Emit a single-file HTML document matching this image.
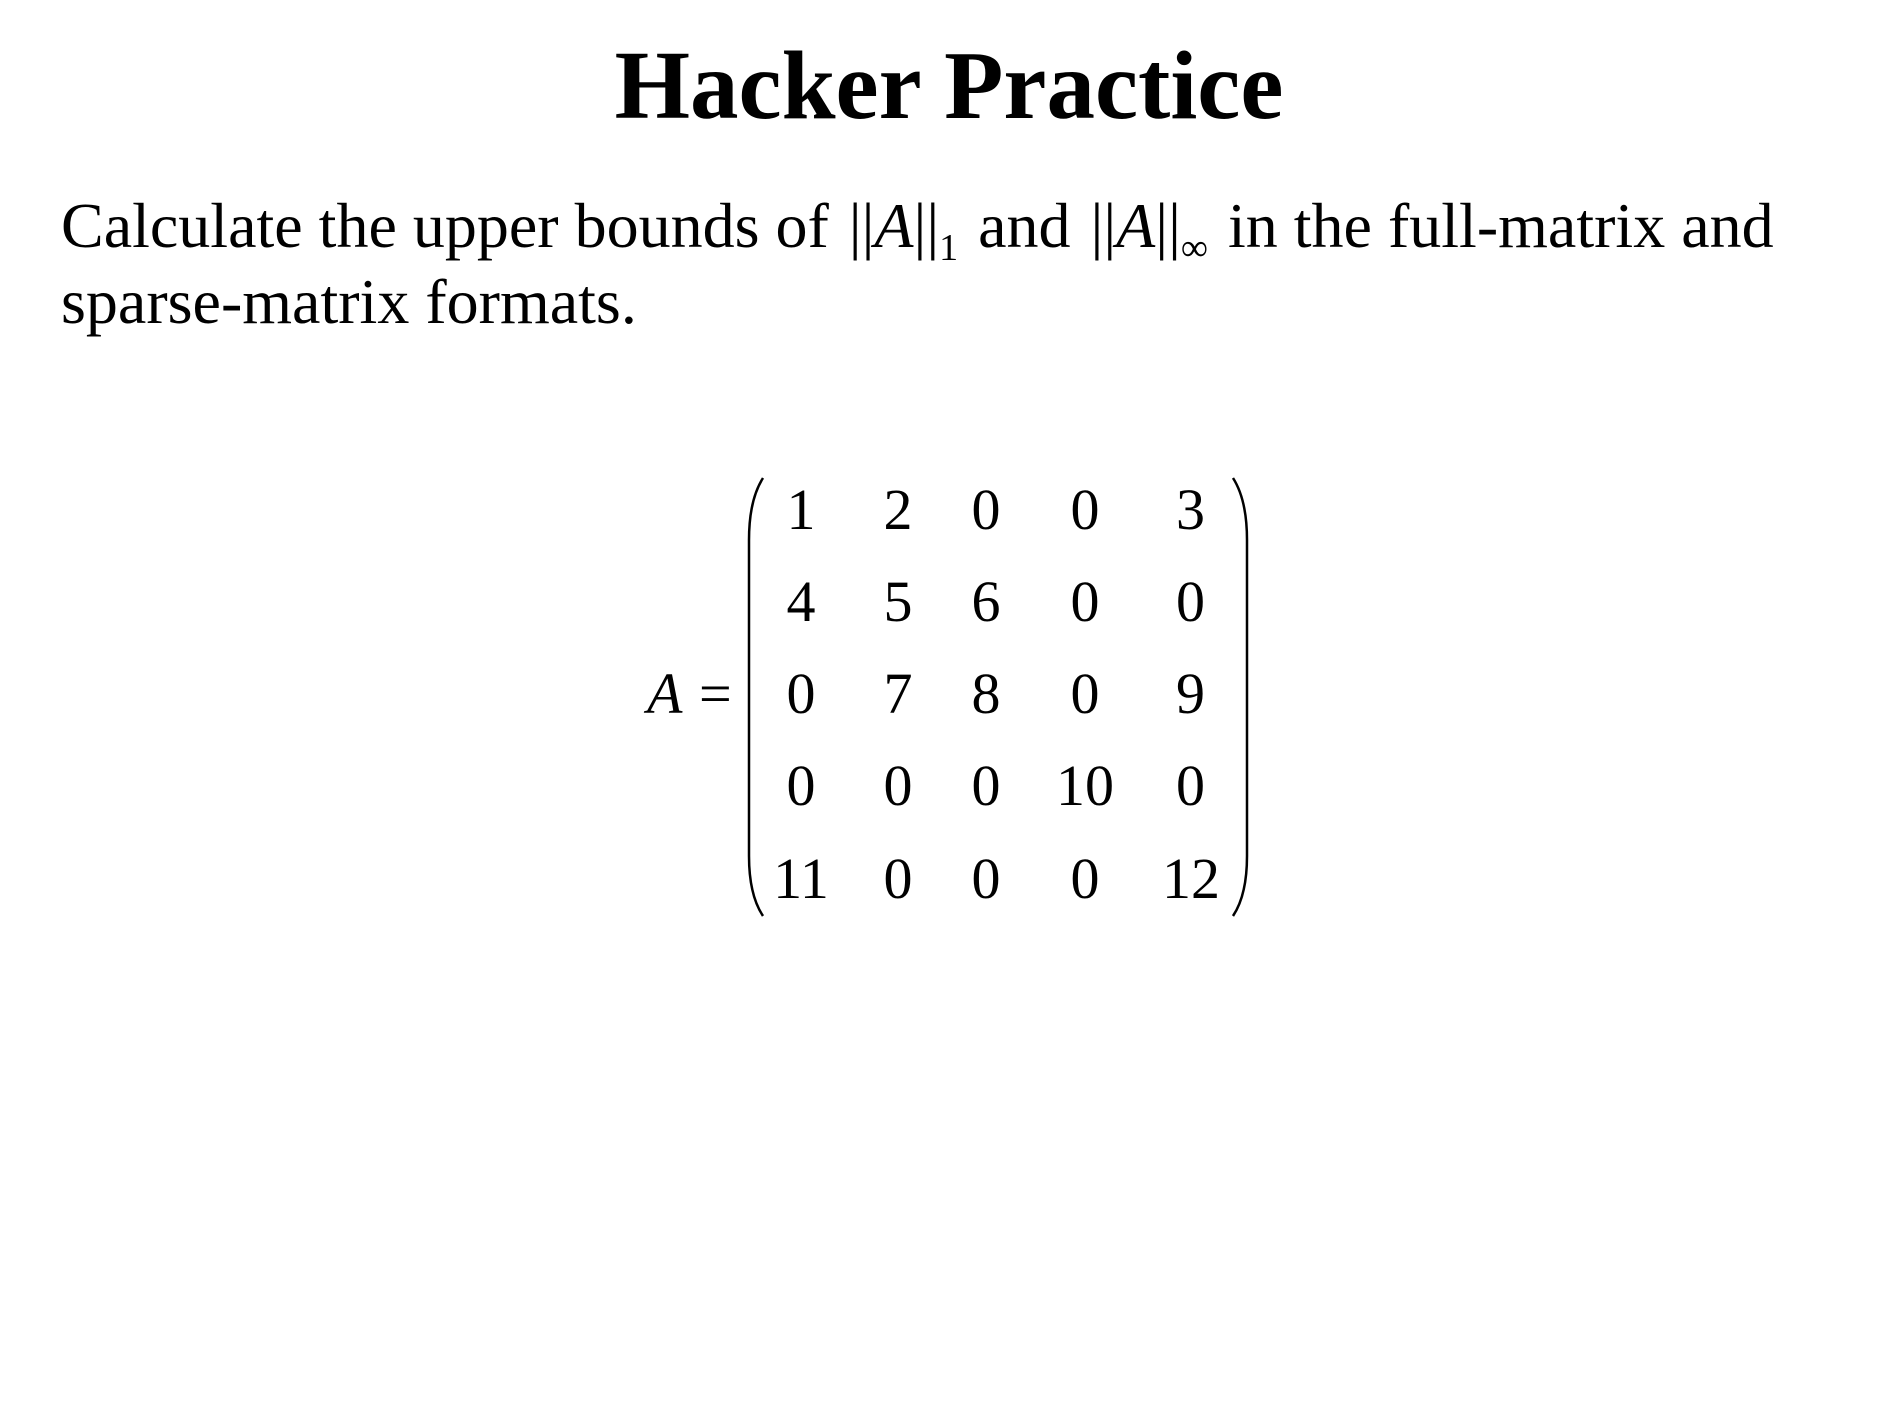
<!DOCTYPE html>
<html><head><meta charset="utf-8"><style>
html,body{margin:0;padding:0;background:#fff;}
body{width:1886px;height:1410px;position:relative;overflow:hidden;font-family:"Liberation Serif",serif;color:#000;}
.t{position:absolute;white-space:nowrap;line-height:1;}
#title{left:0;width:1898px;text-align:center;top:37px;font-size:97px;font-weight:bold;}
.b{font-size:64px;left:61px;}
i{font-style:italic;}
sub{font-size:38px;vertical-align:-13px;line-height:0;}
.n{margin:0 4px;}
</style></head><body>
<div id="title" class="t">Hacker Practice</div>
<div class="t b" style="top:194px">Calculate the upper bounds of <span class="n">||<i>A</i>||<sub>1</sub></span> and <span class="n">||<i>A</i>||<sub>∞</sub></span> in the full-matrix and</div>
<div class="t b" style="top:270px">sparse-matrix formats.</div>
<svg width="1886" height="1410" style="position:absolute;left:0;top:0" font-family="Liberation Serif, serif" font-size="58">
<text x="647" y="713" font-style="italic">A</text>
<text x="699" y="713">=</text>
<path d="M763 478 Q749 500 749 540 L749 856 Q749 895 763 916" fill="none" stroke="#000" stroke-width="2.5"/>
<path d="M1233 478 Q1247 500 1247 540 L1247 856 Q1247 895 1233 916" fill="none" stroke="#000" stroke-width="2.5"/>
<g text-anchor="middle">
<text x="801" y="529">1</text><text x="898" y="529">2</text><text x="986" y="529">0</text><text x="1085" y="529">0</text>
<text x="801" y="621">4</text><text x="898" y="621">5</text><text x="986" y="621">6</text><text x="1085" y="621">0</text>
<text x="801" y="713">0</text><text x="898" y="713">7</text><text x="986" y="713">8</text><text x="1085" y="713">0</text>
<text x="801" y="805">0</text><text x="898" y="805">0</text><text x="986" y="805">0</text><text x="1085" y="805">10</text>
<text x="801" y="898">11</text><text x="898" y="898">0</text><text x="986" y="898">0</text><text x="1085" y="898">0</text>
</g>
<g text-anchor="end">
<text x="1205" y="529">3</text><text x="1205" y="621">0</text><text x="1205" y="713">9</text><text x="1205" y="805">0</text><text x="1220" y="898">12</text>
</g>
</svg>
</body></html>
